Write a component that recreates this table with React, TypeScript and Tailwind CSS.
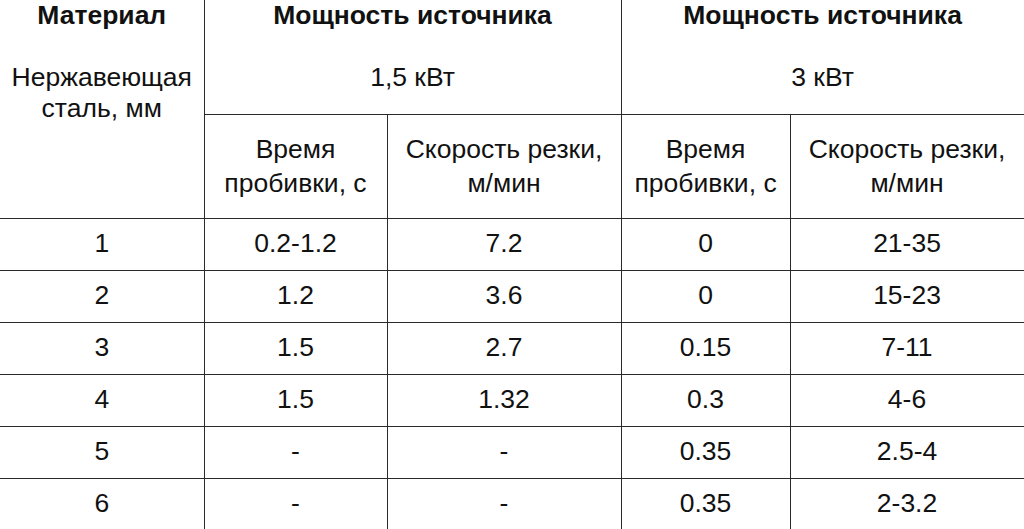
import React from 'react';

const rows: string[][] = [
  ['1', '0.2-1.2', '7.2', '0', '21-35'],
  ['2', '1.2', '3.6', '0', '15-23'],
  ['3', '1.5', '2.7', '0.15', '7-11'],
  ['4', '1.5', '1.32', '0.3', '4-6'],
  ['5', '-', '-', '0.35', '2.5-4'],
  ['6', '-', '-', '0.35', '2-3.2'],
];

const line = 'border-[#2a2a2a]';

const App: React.FC = () => {
  return (
    <div className="w-[1024px] h-[529px] overflow-hidden bg-white text-[#111] font-['Liberation_Sans',Arial,sans-serif] text-[26.5px]">
      <table className="table-fixed border-collapse w-[1024px]">
        <colgroup>
          <col className="w-[204px]" />
          <col className="w-[183px]" />
          <col className="w-[234px]" />
          <col className="w-[169px]" />
          <col className="w-[234px]" />
        </colgroup>
        <tbody>
          <tr className="h-[114px]">
            <td rowSpan={2} className={`border-b border-r ${line} align-top text-center leading-[31px] p-0`}>
              <div className="font-bold">Материал</div>
              <div>&nbsp;</div>
              <div>Нержавеющая</div>
              <div>сталь, мм</div>
            </td>
            <td colSpan={2} className={`border-b border-r ${line} align-top text-center leading-[31px] p-0`}>
              <div className="font-bold">Мощность источника</div>
              <div>&nbsp;</div>
              <div>1,5 кВт</div>
            </td>
            <td colSpan={2} className={`border-b border-r border-r-[#b5b5b5] ${line} align-top text-center leading-[31px] p-0`}>
              <div className="font-bold">Мощность источника</div>
              <div>&nbsp;</div>
              <div>3 кВт</div>
            </td>
          </tr>
          <tr className="h-[104px]">
            <td className={`border-b border-r ${line} text-center leading-[34px] p-0`}>Время<br />пробивки, с</td>
            <td className={`border-b border-r ${line} text-center leading-[34px] p-0`}>Скорость резки,<br />м/мин</td>
            <td className={`border-b border-r ${line} text-center leading-[34px] p-0`}>Время<br />пробивки, с</td>
            <td className={`border-b border-r border-r-[#b5b5b5] ${line} text-center leading-[34px] p-0`}>Скорость резки,<br />м/мин</td>
          </tr>
          {rows.map((r) => (
            <tr key={r[0]} className="h-[52px]">
              {r.map((v, i) => (
                <td
                  key={i}
                  className={`border-b border-r ${line} ${i === 4 ? 'border-r-[#b5b5b5]' : ''} text-center p-0`}
                >
                  {v}
                </td>
              ))}
            </tr>
          ))}
        </tbody>
      </table>
    </div>
  );
};

export default App;
